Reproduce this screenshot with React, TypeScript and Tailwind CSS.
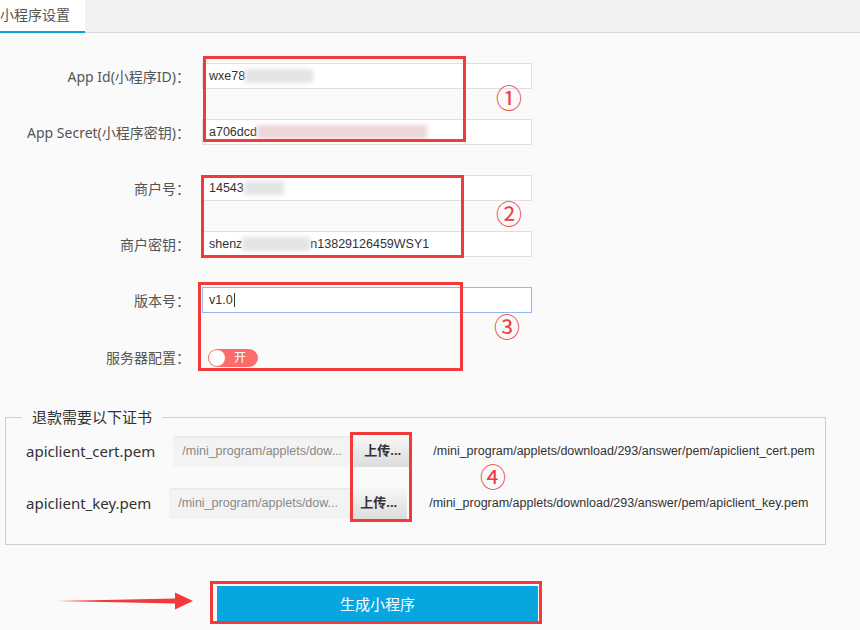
import React from "react";

const labelFont = { fontFamily: '"Noto Sans", "Noto Sans CJK SC", sans-serif' };

function Blur({ w, tint = "#e4e4e4" }: { w: number; tint?: string }) {
  return (
    <span
      className="inline-block h-[14px] blur-[2px] align-middle"
      style={{ width: w, background: tint }}
    />
  );
}

function Row({ label, children, className = "" }: { label: string; children: React.ReactNode; className?: string }) {
  return (
    <div className={`flex items-center ${className}`}>
      <div className="w-[192px] text-right text-[14px] text-[#555] pr-[2px]" style={labelFont}>
        {label}
      </div>
      <div className="ml-[10px]">{children}</div>
    </div>
  );
}

function TextBox({ children, focused = false }: { children: React.ReactNode; focused?: boolean }) {
  return (
    <div
      className={`w-[330px] h-[26px] bg-white border flex items-center pl-[6px] text-[12.5px] text-[#333] ${
        focused ? "border-[#8fb8ef]" : "border-[#dedede]"
      }`}
      style={{ fontFamily: '"Liberation Sans", Arial, sans-serif' }}
    >
      {children}
    </div>
  );
}

function Circled({ ch, x, y }: { ch: string; x: number; y: number }) {
  return (
    <span
      className="absolute text-[26px] leading-none text-[#f03c3c]"
      style={{ left: x, top: y, fontFamily: '"DejaVu Serif", "Noto Sans CJK SC", serif' }}
    >
      {ch}
    </span>
  );
}

function FileRow({ label, path, gap }: { label: string; path: string; gap: number }) {
  return (
    <div className="flex items-center">
      <div className="text-[15px] text-[#333] ml-[20px]" style={labelFont}>
        {label}
      </div>
      <div className="flex items-center" style={{ marginLeft: gap }}>
        <div
          className="w-[181px] h-[31px] bg-[#f3f3f3] rounded-l-[3px] shadow-[inset_0_1px_2px_rgba(0,0,0,0.06)] flex items-center pl-[9px] text-[12.5px] text-[#888]"
          style={{ fontFamily: '"Liberation Sans", Arial, sans-serif' }}
        >
          /mini_program/applets/dow...
        </div>
        <div
          className="w-[57px] h-[31px] bg-gradient-to-b from-[#f7f7f7] to-[#dcdcdc] flex items-center justify-center text-[13px] font-bold text-[#333]"
          style={labelFont}
        >
          上传...
        </div>
        <div
          className="ml-[22px] text-[12.5px] text-[#333]"
          style={{ fontFamily: '"Liberation Sans", Arial, sans-serif' }}
        >
          {path}
        </div>
      </div>
    </div>
  );
}

export default function App() {
  return (
    <div className="relative w-[860px] h-[630px] bg-[#fafafa] overflow-hidden">
      {/* tab bar */}
      <div className="h-[33px] bg-[#f2f2f2] border-b border-[#d9d9d9] flex">
        <div
          className="w-[85px] h-[33px] bg-white border-b-2 border-[#0c9fdc] text-[14px] text-[#555] pt-[4px] -mb-px"
          style={labelFont}
        >
          小程序设置
        </div>
      </div>

      <div className="pt-[30px] flex flex-col gap-[30px]">
        <Row label="App Id(小程序ID)：">
          <TextBox>
            wxe78<Blur w={68} />
          </TextBox>
        </Row>
        <Row label="App Secret(小程序密钥)：">
          <TextBox>
            a706dcd<Blur w={170} tint="#ecd6d8" />
          </TextBox>
        </Row>
        <Row label="商户号：">
          <TextBox>
            14543<Blur w={40} />
          </TextBox>
        </Row>
        <Row label="商户密钥：">
          <TextBox>
            shenz<Blur w={68} />
            n13829126459WSY1
          </TextBox>
        </Row>
        <Row label="版本号：">
          <TextBox focused>
            v1.0<span className="inline-block w-px h-[14px] bg-[#333] ml-px" />
          </TextBox>
        </Row>
        <Row label="服务器配置：" className="mt-[4px]">
          <div className="ml-[6px] w-[50px] h-[18px] rounded-full bg-[#ff6b6b] flex items-center pl-[1px] mt-[1px]">
            <div className="w-[16px] h-[16px] rounded-full bg-white" />
            <span className="ml-[9px] text-[12px] text-white" style={labelFont}>
              开
            </span>
          </div>
        </Row>
      </div>

      {/* certificates */}
      <fieldset className="ml-[5px] mt-[38px] w-[821px] h-[139px] border border-[#cfcfcf] pt-[7px] flex flex-col gap-[21px]">
        <legend className="ml-[16px] px-[10px] text-[15px] text-[#333]" style={labelFont}>
          退款需要以下证书
        </legend>
        <FileRow
          label="apiclient_cert.pem"
          gap={18}
          path="/mini_program/applets/download/293/answer/pem/apiclient_cert.pem"
        />
        <FileRow
          label="apiclient_key.pem"
          gap={18}
          path="/mini_program/applets/download/293/answer/pem/apiclient_key.pem"
        />
      </fieldset>

      {/* submit */}
      <div className="mt-[41px] ml-[217px] w-[321px] h-[37px] bg-[#08a6df] flex items-center justify-center text-[15px] text-white" style={labelFont}>
        生成小程序
      </div>

      {/* annotations */}
      <div className="absolute left-[203px] top-[56px] w-[263px] h-[86px] border-[3px] border-[#f33a3a]" />
      <div className="absolute left-[201px] top-[175px] w-[263px] h-[83px] border-[3px] border-[#f33a3a]" />
      <div className="absolute left-[198px] top-[282px] w-[265px] h-[89px] border-[3px] border-[#f33a3a]" />
      <div className="absolute left-[350px] top-[432px] w-[62px] h-[90px] border-[3px] border-[#f33a3a]" />
      <div className="absolute left-[210px] top-[581px] w-[332px] h-[43px] border-[3px] border-[#f33a3a]" />
      <Circled ch="①" x={496} y={86} />
      <Circled ch="②" x={496} y={202} />
      <Circled ch="③" x={494} y={315} />
      <Circled ch="④" x={480} y={465} />

      <svg className="absolute left-[55px] top-[590px]" width="140" height="22" viewBox="0 0 140 22">
        <polygon points="2,11 120,8.5 120,2.5 138,11 120,19.5 120,13.5" fill="#f23a3a" />
      </svg>
    </div>
  );
}
